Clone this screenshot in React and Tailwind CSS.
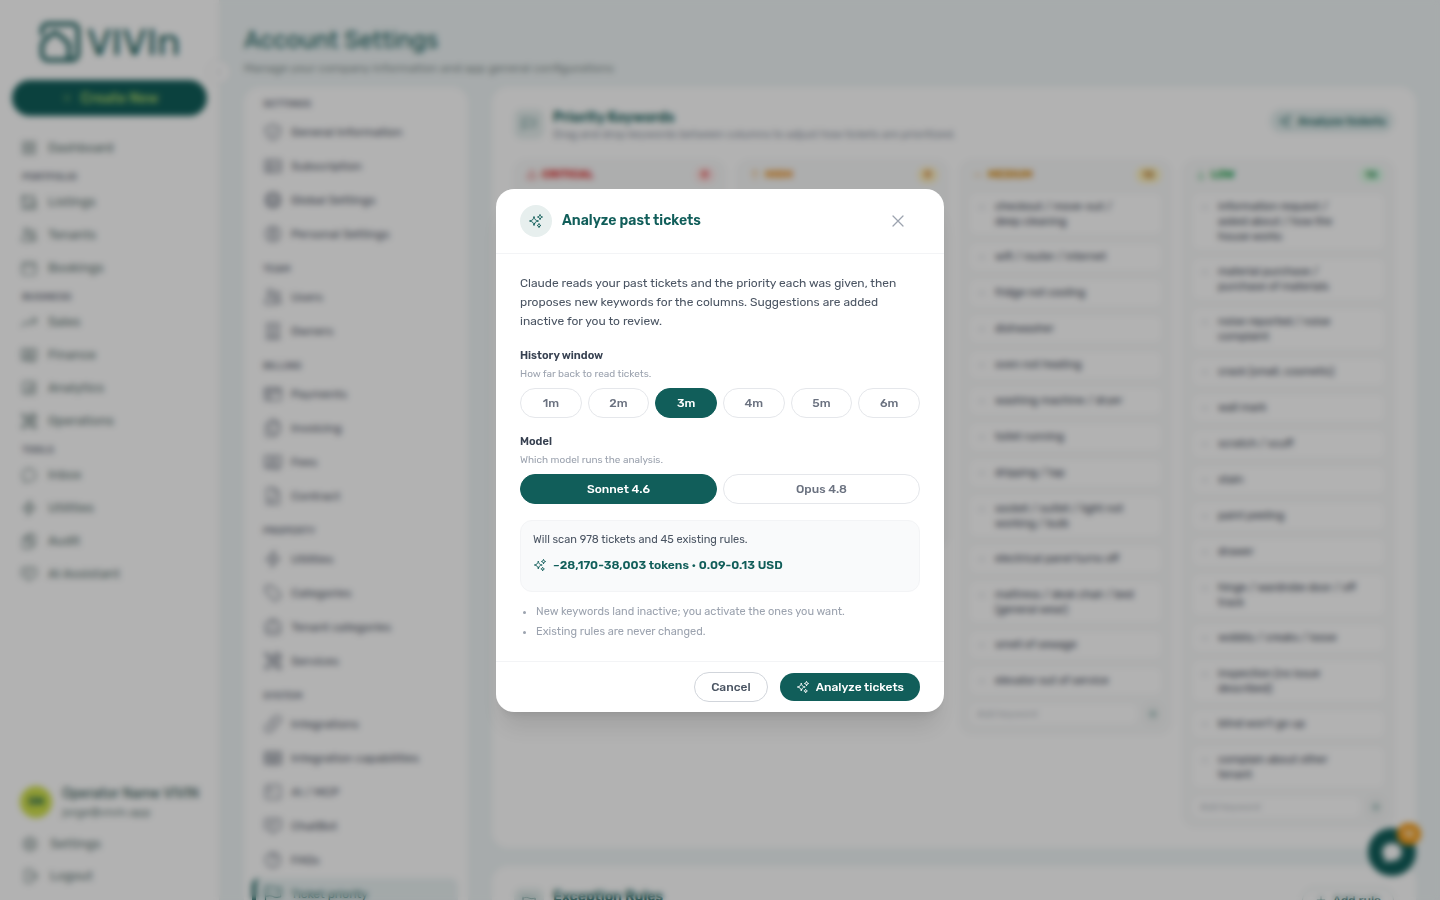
import React, { useState } from "react";
import {
  HiOutlineSparkles, HiOutlineXMark, HiOutlinePlus, HiOutlineSquares2X2, HiOutlineHomeModern,
  HiOutlineUsers, HiOutlineCalendar, HiOutlineArrowTrendingUp, HiOutlineBanknotes, HiOutlineChartBarSquare,
  HiOutlineWrenchScrewdriver, HiOutlineChatBubbleOvalLeft, HiOutlineBolt, HiOutlineClipboardDocument,
  HiOutlineChatBubbleBottomCenterText, HiOutlineCog6Tooth, HiOutlineArrowRightOnRectangle,
  HiOutlineShieldCheck, HiOutlineIdentification, HiOutlineGlobeAlt, HiOutlineUserCircle,
  HiOutlineBuildingOffice, HiOutlineCreditCard, HiOutlineDocumentDuplicate, HiOutlineDocumentText,
  HiOutlineTag, HiOutlineBriefcase, HiOutlineLink, HiOutlineTableCells, HiOutlineCommandLine,
  HiOutlineQuestionMarkCircle, HiOutlineFlag, HiOutlineExclamationTriangle, HiOutlineArrowUp,
  HiOutlineMinus, HiOutlineArrowDown, HiOutlineChevronLeft, HiChatBubbleOvalLeft, HiOutlineBars2,
} from "react-icons/hi2";

const mainNav = [
  { items: [["Dashboard", HiOutlineSquares2X2]] },
  { label: "PORTFOLIO", items: [["Listings", HiOutlineHomeModern], ["Tenants", HiOutlineUsers], ["Bookings", HiOutlineCalendar]] },
  { label: "BUSINESS", items: [["Sales", HiOutlineArrowTrendingUp], ["Finance", HiOutlineBanknotes], ["Analytics", HiOutlineChartBarSquare], ["Operations", HiOutlineWrenchScrewdriver]] },
  { label: "TOOLS", items: [["Inbox", HiOutlineChatBubbleOvalLeft], ["Utilities", HiOutlineBolt], ["Audit", HiOutlineClipboardDocument], ["AI Assistant", HiOutlineChatBubbleBottomCenterText]] },
];

const settingsNav = [
  { label: "SETTINGS", items: [["General Information", HiOutlineShieldCheck], ["Subscription", HiOutlineIdentification], ["Global Settings", HiOutlineGlobeAlt], ["Personal Settings", HiOutlineUserCircle]] },
  { label: "TEAM", items: [["Users", HiOutlineUsers], ["Owners", HiOutlineBuildingOffice]] },
  { label: "BILLING", items: [["Payments", HiOutlineCreditCard], ["Invoicing", HiOutlineDocumentDuplicate], ["Fees", HiOutlineBanknotes], ["Contract", HiOutlineDocumentText]] },
  { label: "PROPERTY", items: [["Utilities", HiOutlineBolt], ["Categories", HiOutlineTag], ["Tenant categories", HiOutlineBriefcase], ["Services", HiOutlineWrenchScrewdriver]] },
  { label: "SYSTEM", items: [["Integrations", HiOutlineLink], ["Integration capabilities", HiOutlineTableCells], ["AI / MCP", HiOutlineCommandLine], ["ChatBot", HiOutlineChatBubbleBottomCenterText], ["FAQs", HiOutlineQuestionMarkCircle], ["Ticket priority", HiOutlineFlag]] },
];

const columns = [
  { name: "CRITICAL", count: 9, Icon: HiOutlineExclamationTriangle, title: "text-[#dc2626]", badge: "bg-[#fee2e2] text-[#dc2626]", cards: Array(9).fill("") },
  { name: "HIGH", count: 9, Icon: HiOutlineArrowUp, title: "text-[#ea8a10]", badge: "bg-[#fef0c0] text-[#c2600c]", cards: Array(9).fill("") },
  {
    name: "MEDIUM", count: 13, Icon: HiOutlineMinus, title: "text-[#d98a0a]", badge: "bg-[#fef3c0] text-[#a8620c]",
    cards: ["checkout / move-out /\ndeep cleaning", "wifi / router / internet", "fridge not cooling", "dishwasher", "oven not heating", "washing machine / dryer", "toilet running", "dripping / tap", "socket / outlet / light not\nworking / bulb", "electrical panel turns off", "mattress / desk chair / bed\n(general wear)", "smell of sewage", "elevator out of service"],
  },
  {
    name: "LOW", count: 14, Icon: HiOutlineArrowDown, title: "text-[#16a34a]", badge: "bg-[#dcfce7] text-[#15803d]",
    cards: ["information request /\nasked about / how the\nhouse works", "material purchase /\npurchase of materials", "noise reported / noise\ncomplaint", "crack (small, cosmetic)", "wall mark", "scratch / scuff", "stain", "paint peeling", "drawer", "hinge / wardrobe door / off\ntrack", "wobbly / creaks / loose", "inspection (no issue\ndescribed)", "blind won't go up", "complain about other\ntenant"],
  },
];

function Logo() {
  return (
    <div className="flex h-[42px] items-center justify-center gap-[6px] text-[#145d5a]">
      <svg viewBox="0 0 42 42" className="size-[42px]" fill="none" stroke="currentColor" strokeWidth="4" strokeLinejoin="round" strokeLinecap="round" aria-hidden="true">
        <path d="M3 13V9a6 6 0 0 1 6-6h24a6 6 0 0 1 6 6v24a6 6 0 0 1-6 6H9a6 6 0 0 1-6-6v-8c0-2 1-4 2-5l8-7c2-2 4-2 6 0l8 7c2 1 3 3 3 5v13" />
      </svg>
      <span className="text-[38px] leading-none">VIVIn</span>
    </div>
  );
}

function Sidebar() {
  return (
    <aside className="relative flex w-[220px] shrink-0 flex-col border-r border-[#eef0f0] bg-white px-3">
      <div className="pt-[21px]"><Logo /></div>
      <button className="mt-[17px] flex h-9 shrink-0 items-center justify-center gap-2 rounded-full bg-[#115e5a] text-[14px] font-medium text-[#a9d36a]">
        <HiOutlinePlus className="size-3" />
        Create New
      </button>
      <nav className="mt-[15px] flex flex-col">
        {mainNav.map((g, i) => (
          <div key={i} className="flex flex-col">
            {g.label && <div className="pt-[6px] pl-[10px] text-[10px] leading-[15px] font-medium text-[#6b7280]">{g.label}</div>}
            {g.items.map(([name, Icon]) => (
              <a key={name} href="#" className="flex h-[33px] items-center gap-[10px] pl-2 text-[13px] text-[#5b716f]">
                <Icon className="size-[18px]" />
                {name}
              </a>
            ))}
          </div>
        ))}
      </nav>
      <div className="mt-auto flex flex-col pb-2">
        <div className="flex items-center gap-[10px] pb-2 pl-2">
          <div className="flex size-8 shrink-0 items-center justify-center rounded-full bg-[#cfe04a] text-[11px] font-semibold text-[#115e5a]">ON</div>
          <div className="whitespace-nowrap">
            <div className="text-[14px] leading-5 text-[#2c504e]">Operator Name VIVIN</div>
            <div className="text-[12px] leading-4 text-[#6b7f7d]">jorge@vivin.app</div>
          </div>
        </div>
        {[["Settings", HiOutlineCog6Tooth], ["Logout", HiOutlineArrowRightOnRectangle]].map(([name, Icon]) => (
          <a key={name} href="#" className="flex h-8 items-center gap-[11px] pl-[9px] text-[13px] text-[#5b716f]">
            <Icon className="size-[18px]" />
            {name}
          </a>
        ))}
      </div>
      <button aria-label="Collapse sidebar" className="absolute top-[60px] -right-3 flex size-6 items-center justify-center rounded-full border border-[#e5e7eb] bg-white text-[#9ca3af]">
        <HiOutlineChevronLeft className="size-3" />
      </button>
    </aside>
  );
}

function SettingsPanel() {
  return (
    <nav className="flex w-56 shrink-0 flex-col gap-[2px] overflow-hidden rounded-t-2xl bg-white pr-[10px] pl-2">
      {settingsNav.map((g) => (
        <React.Fragment key={g.label}>
          <div className="shrink-0 pt-[9px] pb-[2px] pl-[11px] text-[10px] leading-4 font-medium text-[#6b7280]">{g.label}</div>
          {g.items.map(([name, Icon]) => (
            <a
              key={name}
              href="#"
              className={
                name === "Ticket priority"
                  ? "flex h-8 shrink-0 items-center gap-2 rounded-lg border-l-4 border-[#115e5a] bg-[#eaf2f3] pl-[7px] text-[12px] whitespace-nowrap text-[#115e5a]"
                  : "flex h-8 shrink-0 items-center gap-2 pl-[11px] text-[12px] whitespace-nowrap text-[#4b5262]"
              }
            >
              <Icon className={name === "Ticket priority" ? "size-5" : "size-5 text-[#6b7280]"} />
              {name}
            </a>
          ))}
        </React.Fragment>
      ))}
    </nav>
  );
}

function Column({ col }) {
  const { Icon } = col;
  return (
    <section className="flex flex-col rounded-xl border border-[#eef1f3] bg-[#f8f9f9] px-[7px] pb-[7px]">
      <header className="flex h-[31px] items-center gap-1 pr-[2px] pb-[3px] pl-1">
        <Icon className={`size-3 ${col.title}`} />
        <h3 className={`text-[11px] font-bold ${col.title}`}>{col.name}</h3>
        <span className={`ml-auto rounded-full px-[7px] text-[10px] leading-4 font-semibold ${col.badge}`}>{col.count}</span>
      </header>
      <ul className="flex flex-col gap-[6px]">
        {col.cards.map((text, i) => (
          <li key={i} className="flex min-h-[30px] items-start gap-2 rounded-lg border border-[#f1f3f5] bg-white px-2 py-[6px] text-[11px] leading-[15px] text-[#374151]">
            <HiOutlineBars2 className="mt-[3px] size-[10px] shrink-0 text-[#b4bac2]" />
            <span className="whitespace-pre">{text}</span>
          </li>
        ))}
      </ul>
      <div className="mt-[6px] flex h-6 items-center gap-1">
        <input aria-label={`Add keyword to ${col.name}`} placeholder="Add keyword" className="h-full min-w-0 flex-1 rounded-lg border border-[#f1f3f5] bg-white px-2 text-[10px] placeholder:text-[#b4bac2]" />
        <button aria-label="Add" className="flex h-full w-5 items-center justify-center rounded-lg bg-[#f3f5f5] text-[#115e5a]">
          <HiOutlinePlus className="size-3" />
        </button>
      </div>
    </section>
  );
}

function CardHeader({ title, text, children }) {
  return (
    <div className="flex items-start gap-[9px]">
      <div className="flex size-[30px] items-center justify-center rounded-lg bg-[#e6efee] text-[#3c7a77]">
        <HiOutlineFlag className="size-4" />
      </div>
      <div className="whitespace-nowrap">
        <h2 className="text-[14px] leading-[18px] font-semibold text-[#115e5a]">{title}</h2>
        <p className="text-[11px] leading-4 text-[#8b93a1]">{text}</p>
      </div>
      <div className="ml-auto">{children}</div>
    </div>
  );
}

function Pills({ label, help, options, value, onChange, cols }) {
  return (
    <div role="group" aria-label={label}>
      <h3 className="text-[11px] leading-4 font-semibold text-[#374151]">{label}</h3>
      <p className="mt-1 text-[10px] leading-[13px] text-[#9ca3af]">{help}</p>
      <div className={`mt-[7px] grid gap-[6px] ${cols}`}>
        {options.map((o) => (
          <button
            key={o}
            aria-pressed={o === value}
            onClick={() => onChange(o)}
            className={
              o === value
                ? "h-[30px] rounded-full border border-[#115e5a] bg-[#115e5a] text-[12px] font-medium text-white"
                : "h-[30px] rounded-full border border-[#e5e7eb] bg-white text-[12px] font-medium text-[#6b7280]"
            }
          >
            {o}
          </button>
        ))}
      </div>
    </div>
  );
}

function AnalyzeDialog() {
  const [period, setPeriod] = useState("3m");
  const [model, setModel] = useState("Sonnet 4.6");
  return (
    <div role="dialog" aria-modal="true" aria-labelledby="dialog-title" className="w-full max-w-md rounded-[18px] bg-white shadow-xl">
      <header className="flex items-center gap-[10px] border-b border-[#f3f4f6] px-6 py-4">
        <div className="flex size-8 items-center justify-center rounded-full bg-[#e7efee] text-[#115e5a]">
          <HiOutlineSparkles className="size-4" />
        </div>
        <h2 id="dialog-title" className="text-[14px] leading-5 font-semibold text-[#115e5a]">Analyze past tickets</h2>
        <button aria-label="Close" className="mr-3 ml-auto text-[#9ca3af]">
          <HiOutlineXMark className="size-5" />
        </button>
      </header>
      <div className="flex flex-col gap-4 px-6 pt-5 pb-[19px]">
        <p className="pb-px text-[12px] leading-[19px] text-[#4b5563]">
          Claude reads your past tickets and the priority each was given, then<br />
          proposes new keywords for the columns. Suggestions are added<br />
          inactive for you to review.
        </p>
        <Pills label="History window" help="How far back to read tickets." options={["1m", "2m", "3m", "4m", "5m", "6m"]} value={period} onChange={setPeriod} cols="grid-cols-6" />
        <Pills label="Model" help="Which model runs the analysis." options={["Sonnet 4.6", "Opus 4.8"]} value={model} onChange={setModel} cols="grid-cols-2" />
        <div className="rounded-xl border border-[#f3f4f6] bg-[#f9fafb] px-3 pt-[11px] pb-[18px]">
          <p className="text-[11px] leading-4 text-[#4b5563]">Will scan 978 tickets and 45 existing rules.</p>
          <p className="mt-[9px] flex items-center gap-[6px] text-[12px] leading-4 font-semibold text-[#115e5a]">
            <HiOutlineSparkles className="size-[14px]" />
            ~28,170-38,003 tokens • 0.09-0.13 USD
          </p>
        </div>
        <ul className="-mt-[6px] list-disc pl-4 text-[11px] leading-5 text-[#9ca3af]">
          <li>New keywords land inactive; you activate the ones you want.</li>
          <li>Existing rules are never changed.</li>
        </ul>
      </div>
      <footer className="flex items-center justify-end gap-3 border-t border-[#f3f4f6] px-6 py-[10px]">
        <button className="h-[30px] rounded-full border border-[#d1d5db] px-4 text-[12px] font-medium text-[#4b5563]">Cancel</button>
        <button className="flex h-7 items-center gap-[6px] rounded-full bg-[#115e5a] px-4 text-[12px] font-medium text-white">
          <HiOutlineSparkles className="size-[14px]" />
          Analyze tickets
        </button>
      </footer>
    </div>
  );
}

export default function App() {
  return (
    <div className="flex h-screen overflow-hidden bg-[#eff5f6] font-['Rubik','Inter',sans-serif]">
      <Sidebar />
      <main className="flex min-w-0 flex-1 flex-col px-6">
        <h1 className="mt-6 text-[24px] leading-8 text-[#145d5a]">Account Settings</h1>
        <p className="mt-1 text-[12px] leading-4 text-[#84908f]">Manage your company information and app general configurations</p>
        <div className="mt-[11px] flex min-h-0 flex-1 gap-6">
          <SettingsPanel />
          <div className="flex min-w-0 flex-1 flex-col gap-[18px]">
            <section className="shrink-0 rounded-2xl bg-white px-[22px] pt-[22px] pb-[21px]">
              <CardHeader title="Priority Keywords" text="Drag and drop keywords between columns to adjust how tickets are prioritized.">
                <button className="flex h-6 items-center gap-[6px] rounded-full bg-[#e2eded] px-2 text-[12px] font-medium text-[#115e5a]">
                  <HiOutlineSparkles className="size-[14px]" />
                  Analyze tickets
                </button>
              </CardHeader>
              <div className="mt-[17px] grid grid-cols-4 items-start gap-3">
                {columns.map((c) => <Column key={c.name} col={c} />)}
              </div>
            </section>
            <section className="shrink-0 rounded-2xl bg-white px-[22px] pt-[22px] pb-5">
              <CardHeader title="Exception Rules" text="">
                <button className="flex h-6 items-center gap-[6px] rounded-full border border-[#cfdedd] px-3 text-[12px] font-medium text-[#115e5a]">
                  <HiOutlinePlus className="size-3" />
                  Add rule
                </button>
              </CardHeader>
            </section>
          </div>
        </div>
      </main>
      <button aria-label="Open chat" className="fixed right-6 bottom-6 flex size-12 items-center justify-center rounded-full bg-[#115e5a] text-white">
        <HiChatBubbleOvalLeft className="size-6" />
        <span className="absolute -top-[5px] -right-[5px] flex h-[22px] w-6 items-center justify-center rounded-full bg-[#f59e1b] text-[10px] font-semibold">12</span>
      </button>
      <div className="fixed inset-0 flex items-center justify-center bg-black/30 backdrop-blur-[3px]">
        <AnalyzeDialog />
      </div>
    </div>
  );
}
